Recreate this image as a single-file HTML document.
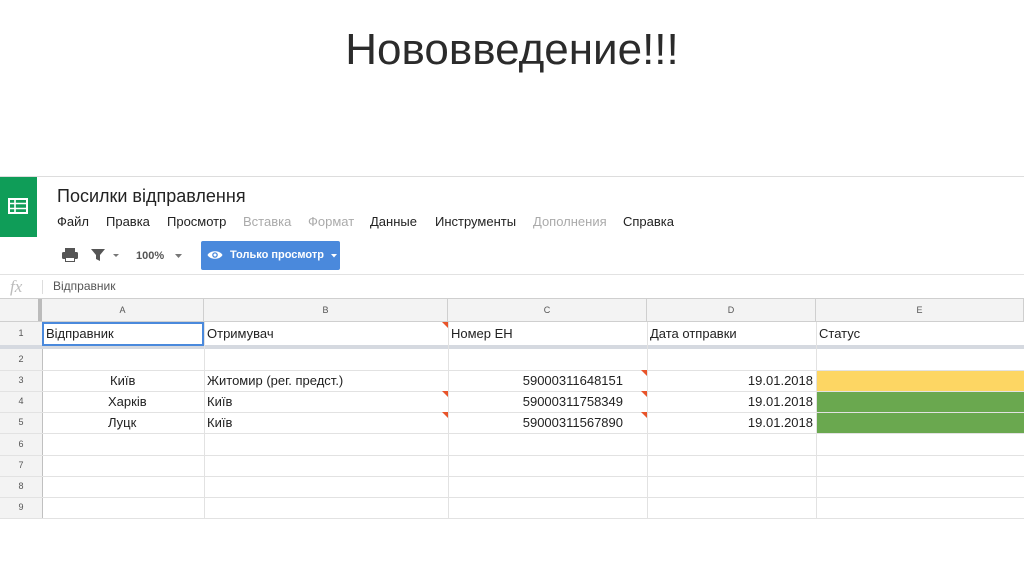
<!DOCTYPE html>
<html><head><meta charset="utf-8"><style>
body{margin:0;width:1024px;height:574px;background:#fff;position:relative;overflow:hidden;font-family:"Liberation Sans",Arial,sans-serif;}
.a{position:absolute;}
.t{font-size:13px;color:#222;white-space:nowrap;}
.rh{position:absolute;left:0;width:42px;background:#f3f3f3;border-right:1px solid #c0c0c0;font-size:9px;color:#555;text-align:center;}
.hl{position:absolute;left:0;width:1024px;height:1px;background:#e2e2e2;}
.vl{position:absolute;width:1px;background:#e2e2e2;top:322px;height:196px;}
.ch{position:absolute;top:299px;height:23px;line-height:23px;background:#f3f3f3;font-size:9px;color:#555;text-align:center;border-right:1px solid #cfcfcf;box-sizing:border-box;}
.tri{position:absolute;width:0;height:0;border-top:6px solid #e8542a;border-left:6px solid transparent;}
.m{position:absolute;top:214px;font-size:13px;color:#222;}
.g{color:#aaa;}
</style></head><body>
<div class="a" style="left:0;width:1024px;top:25px;text-align:center;font-size:44px;color:#2b2b2b;">Нововведение!!!</div>

<div class="a" style="left:0;top:176px;width:1024px;height:1px;background:#ddd"></div>
<div class="a" style="left:0;top:177px;width:37px;height:60px;background:#0f9d58"></div>
<svg class="a" style="left:8px;top:198px" width="20" height="16" viewBox="0 0 20 16"><rect x="1" y="1" width="18" height="14" fill="none" stroke="#fff" stroke-width="2"/><path d="M1 5.5H19M1 10.5H19M7 1V15" stroke="#fff" stroke-width="1.6"/></svg>
<div class="a" style="left:57px;top:186px;font-size:18px;color:#222">Посилки відправлення</div>
<div class="m" style="left:57px">Файл</div>
<div class="m" style="left:106px">Правка</div>
<div class="m" style="left:167px">Просмотр</div>
<div class="m g" style="left:243px">Вставка</div>
<div class="m g" style="left:308px">Формат</div>
<div class="m" style="left:370px">Данные</div>
<div class="m" style="left:435px">Инструменты</div>
<div class="m g" style="left:533px">Дополнения</div>
<div class="m" style="left:623px">Справка</div>

<svg class="a" style="left:61px;top:247px" width="18" height="16" viewBox="0 0 18 16"><rect x="4" y="1" width="10" height="4" fill="#555"/><rect x="1" y="5" width="16" height="7" rx="1.5" fill="#555"/><rect x="4" y="10" width="10" height="5" fill="#555"/><rect x="5" y="11" width="8" height="3" fill="#fff"/></svg>
<svg class="a" style="left:91px;top:248px" width="30" height="14" viewBox="0 0 30 14"><path d="M0 1H14L9 7V13L5 11V7Z" fill="#555"/><path d="M22 6H28L25 9Z" fill="#777"/></svg>
<div class="a" style="left:136px;top:250px;font-size:11px;font-weight:bold;color:#555">100%</div>
<svg class="a" style="left:175px;top:254px" width="8" height="5"><path d="M0 0H7L3.5 4Z" fill="#777"/></svg>
<div class="a" style="left:201px;top:241px;width:139px;height:29px;background:#4a89dc;border-radius:2px"></div>
<svg class="a" style="left:207px;top:249px" width="16" height="12" viewBox="0 0 16 12"><path d="M0.5 6C3 1 13 1 15.5 6C13 11 3 11 0.5 6Z" fill="#fff"/><circle cx="8" cy="6" r="2.8" fill="#4a89dc"/><circle cx="8" cy="6" r="1.5" fill="#fff"/></svg>
<div class="a" style="left:230px;top:249px;font-size:11px;font-weight:bold;color:#fff">Только просмотр</div>
<svg class="a" style="left:331px;top:254px" width="6" height="4"><path d="M0 0H6L3 3.5Z" fill="#fff"/></svg>

<div class="a" style="left:0;top:274px;width:1024px;height:1px;background:#e2e2e2"></div>
<div class="a" style="left:10px;top:277px;font-size:17px;font-style:italic;color:#bbb;font-family:'Liberation Serif',serif">fx</div>
<div class="a" style="left:42px;top:280px;width:1px;height:14px;background:#ddd"></div>
<div class="a t" style="left:53px;top:279px;color:#555;font-size:12px">Відправник</div>
<div class="a" style="left:0;top:298px;width:1024px;height:1px;background:#cfcfcf"></div>

<div class="ch" style="left:0;width:42px;border-right:4px solid #bbb"></div>
<div class="ch" style="left:42px;width:162px">A</div>
<div class="ch" style="left:204px;width:244px">B</div>
<div class="ch" style="left:448px;width:199px">C</div>
<div class="ch" style="left:647px;width:169px">D</div>
<div class="ch" style="left:816px;width:208px">E</div>
<div class="a" style="left:0;top:321px;width:1024px;height:1px;background:#cfcfcf"></div>

<div class="rh" style="top:322px;height:23px;line-height:23px">1</div>
<div class="a" style="left:0;top:345px;width:1024px;height:4px;background:#d5d9e0"></div>
<div class="rh" style="top:349px;height:21px;line-height:21px">2</div>
<div class="rh" style="top:370px;height:21px;line-height:21px">3</div>
<div class="rh" style="top:391px;height:21px;line-height:21px">4</div>
<div class="rh" style="top:412px;height:21px;line-height:21px">5</div>
<div class="rh" style="top:433px;height:22px;line-height:22px">6</div>
<div class="rh" style="top:455px;height:21px;line-height:21px">7</div>
<div class="rh" style="top:476px;height:21px;line-height:21px">8</div>
<div class="rh" style="top:497px;height:21px;line-height:21px">9</div>

<div class="a" style="left:816px;top:370px;width:208px;height:21px;background:#fdd663"></div>
<div class="a" style="left:816px;top:391px;width:208px;height:42px;background:#6aa84f"></div>

<div class="hl" style="top:370px"></div><div class="hl" style="top:391px"></div><div class="hl" style="top:412px"></div><div class="hl" style="top:433px"></div><div class="hl" style="top:455px"></div><div class="hl" style="top:476px"></div><div class="hl" style="top:497px"></div><div class="hl" style="top:518px"></div>
<div class="vl" style="left:204px"></div><div class="vl" style="left:448px"></div><div class="vl" style="left:647px"></div><div class="vl" style="left:816px"></div>

<div class="a" style="left:42px;top:322px;width:158px;height:20px;border:2px solid #4a89dc"></div>
<div class="a t" style="left:46px;top:326px">Відправник</div>
<div class="a t" style="left:207px;top:326px">Отримувач</div>
<div class="a t" style="left:451px;top:326px">Номер ЕН</div>
<div class="a t" style="left:650px;top:326px">Дата отправки</div>
<div class="a t" style="left:819px;top:326px">Статус</div>
<div class="tri" style="left:442px;top:322px"></div>

<div class="a t" style="left:110px;top:373px">Київ</div>
<div class="a t" style="left:108px;top:394px">Харків</div>
<div class="a t" style="left:108px;top:415px">Луцк</div>
<div class="a t" style="left:207px;top:373px">Житомир (рег. предст.)</div>
<div class="a t" style="left:207px;top:394px">Київ</div>
<div class="a t" style="left:207px;top:415px">Київ</div>
<div class="tri" style="left:442px;top:391px"></div><div class="tri" style="left:442px;top:412px"></div>
<div class="a t" style="left:448px;width:175px;text-align:right;top:373px">59000311648151</div>
<div class="a t" style="left:448px;width:175px;text-align:right;top:394px">59000311758349</div>
<div class="a t" style="left:448px;width:175px;text-align:right;top:415px">59000311567890</div>
<div class="tri" style="left:641px;top:370px"></div><div class="tri" style="left:641px;top:391px"></div><div class="tri" style="left:641px;top:412px"></div>
<div class="a t" style="left:647px;width:166px;text-align:right;top:373px">19.01.2018</div>
<div class="a t" style="left:647px;width:166px;text-align:right;top:394px">19.01.2018</div>
<div class="a t" style="left:647px;width:166px;text-align:right;top:415px">19.01.2018</div>
</body></html>
